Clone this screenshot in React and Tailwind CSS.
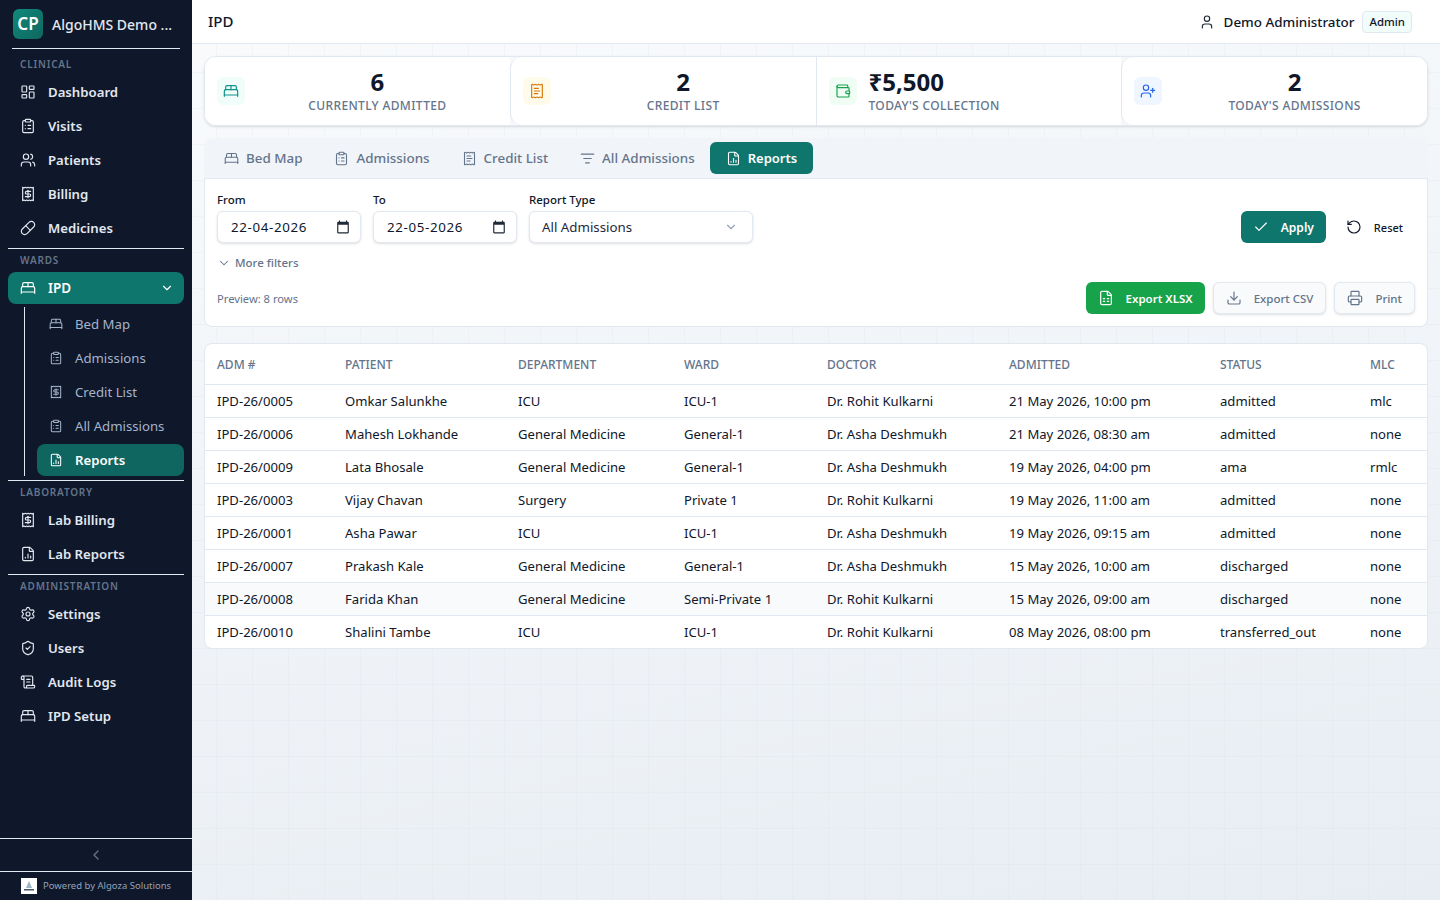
import React from 'react';
import {
  LayoutDashboard, ClipboardList, Users, Receipt, Pill, BedDouble, ChevronDown, ChevronLeft,
  ReceiptText, FileChartColumn, Settings, ShieldCheck, ScrollText, User, Wallet, UserPlus,
  ListFilter, Check, RotateCcw, FileSpreadsheet, Download, Printer,
} from 'lucide-react';

const rows = [
  ['IPD-26/0005', 'Omkar Salunkhe', 'ICU', 'ICU-1', 'Dr. Rohit Kulkarni', '21 May 2026, 10:00 pm', 'admitted', 'mlc'],
  ['IPD-26/0006', 'Mahesh Lokhande', 'General Medicine', 'General-1', 'Dr. Asha Deshmukh', '21 May 2026, 08:30 am', 'admitted', 'none'],
  ['IPD-26/0009', 'Lata Bhosale', 'General Medicine', 'General-1', 'Dr. Asha Deshmukh', '19 May 2026, 04:00 pm', 'ama', 'rmlc'],
  ['IPD-26/0003', 'Vijay Chavan', 'Surgery', 'Private 1', 'Dr. Rohit Kulkarni', '19 May 2026, 11:00 am', 'admitted', 'none'],
  ['IPD-26/0001', 'Asha Pawar', 'ICU', 'ICU-1', 'Dr. Asha Deshmukh', '19 May 2026, 09:15 am', 'admitted', 'none'],
  ['IPD-26/0007', 'Prakash Kale', 'General Medicine', 'General-1', 'Dr. Asha Deshmukh', '15 May 2026, 10:00 am', 'discharged', 'none'],
  ['IPD-26/0008', 'Farida Khan', 'General Medicine', 'Semi-Private 1', 'Dr. Rohit Kulkarni', '15 May 2026, 09:00 am', 'discharged', 'none'],
  ['IPD-26/0010', 'Shalini Tambe', 'ICU', 'ICU-1', 'Dr. Rohit Kulkarni', '08 May 2026, 08:00 pm', 'transferred_out', 'none'],
];

const headers = ['ADM #', 'PATIENT', 'DEPARTMENT', 'WARD', 'DOCTOR', 'ADMITTED', 'STATUS', 'MLC'];

const NavItem = ({ icon: Icon, label }) => (
  <div className="flex h-[34px] items-center gap-3 pl-5 text-[13.2px] font-semibold text-[#e2e8f0]">
    <Icon size={16} strokeWidth={1.75} className="shrink-0" />
    <span className="pt-px">{label}</span>
  </div>
);

const SubItem = ({ icon: Icon, label, active }) => (
  <div
    className={
      active
        ? 'mt-px flex h-8 items-center gap-3 rounded-lg bg-[#0f6660] pl-3 text-[13.2px] font-semibold text-white'
        : 'flex h-[34px] items-center gap-3 pl-3 text-[13.2px] text-[#a5b4cb]'
    }
  >
    <Icon size={14} strokeWidth={1.75} className="shrink-0" />
    <span className="pt-px">{label}</span>
  </div>
);

const SectionTitle = ({ children }) => (
  <div className="flex h-[22px] items-center pl-5 text-[10px] font-semibold tracking-[0.08em] text-[#64748b]">{children}</div>
);

const Divider = () => <div className="mx-2 h-px bg-[#e2e8f0]" />;

const Stat = ({ icon: Icon, tint, value, label, left, rounded, first }) => (
  <div className={`flex h-[68px] flex-1 items-center gap-3 bg-white px-3 ${first ? '' : 'border-l border-[#e2e8f0]'} ${rounded ? 'rounded-l-xl' : ''}`}>
    <div className={`flex h-7 w-7 shrink-0 items-center justify-center rounded-md ${tint}`}>
      <Icon size={16} strokeWidth={1.75} />
    </div>
    <div className={`flex flex-1 flex-col ${left ? 'items-start' : 'items-center'}`}>
      <div className="pb-[2px] text-[24px] leading-[28px] font-bold text-[#0f172a]">{value}</div>
      <div className="text-[12px] leading-[16px] font-medium tracking-[0.03em] text-[#64748b]">{label}</div>
    </div>
  </div>
);

const Tab = ({ icon: Icon, label, active }) => (
  <div
    className={
      active
        ? '-ml-px flex h-8 items-center gap-[7px] rounded-md bg-[#0f766e] px-4 text-[13px] font-semibold text-white'
        : 'flex h-8 items-center gap-[7px] px-4 text-[13.4px] font-medium text-[#64748b]'
    }
  >
    <Icon size={15} strokeWidth={1.75} />
    <span className="pt-px">{label}</span>
  </div>
);

const CalendarGlyph = () => (
  <svg viewBox="0 0 24 24" width="14" height="14" fill="#1f2937">
    <path d="M20 3h-1V1h-2v2H7V1H5v2H4c-1.1 0-2 .9-2 2v16c0 1.1.9 2 2 2h16c1.1 0 2-.9 2-2V5c0-1.1-.9-2-2-2zm0 18H4V8h16v13z" />
  </svg>
);

const DateField = ({ label, value }) => (
  <div className="flex w-[144px] flex-col">
    <label className="mb-[3px] text-[11.5px] leading-4 font-medium text-[#0f172a]">{label}</label>
    <div className="flex h-8 items-center justify-between rounded-md border border-[#e2e8f0] bg-white pr-[10px] pl-[13px] text-[13.3px] tracking-[0.05em] text-[#0f172a] shadow-sm">
      <span className="pt-px">{value}</span>
      <CalendarGlyph />
    </div>
  </div>
);

const GhostButton = ({ icon: Icon, label }) => (
  <div className="flex h-[32px] items-center gap-3 rounded-md border border-[#e2e8f0] bg-[#f8fafc] px-3 text-[11.5px] font-medium text-[#64748b] shadow-sm">
    <Icon size={16} strokeWidth={1.75} />
    <span className="pt-px">{label}</span>
  </div>
);

export default function App() {
  return (
    <div className="flex h-[900px] w-[1440px] overflow-hidden bg-[#f8fafc] font-['Noto_Sans',sans-serif]">
      <aside className="flex w-[192px] shrink-0 flex-col bg-[#0f172a]">
        <div className="flex h-[48px] items-center gap-[9px] pl-[13px]">
          <div className="flex h-[30px] w-[30px] items-center justify-center rounded-md bg-gradient-to-br from-[#0f8a7c] to-[#0f6660] text-[17px] font-semibold text-white">CP</div>
          <span className="text-[14px] font-medium text-[#e2e8f0]">AlgoHMS Demo ...</span>
        </div>
        <div className="mx-3 h-px bg-[#e2e8f0]" />
        <div className="pt-[4px]">
          <SectionTitle>CLINICAL</SectionTitle>
          <NavItem icon={LayoutDashboard} label="Dashboard" />
          <NavItem icon={ClipboardList} label="Visits" />
          <NavItem icon={Users} label="Patients" />
          <NavItem icon={Receipt} label="Billing" />
          <NavItem icon={Pill} label="Medicines" />
        </div>
        <div className="mt-[3px]"><Divider /></div>
        <SectionTitle>WARDS</SectionTitle>
        <div className="mx-2 mt-px flex h-8 items-center justify-between rounded-lg bg-[#0f766e] pr-[10px] pl-3 text-[13.5px] font-semibold text-white">
          <div className="flex items-center gap-3">
            <BedDouble size={16} strokeWidth={1.75} />
            <span>IPD</span>
          </div>
          <ChevronDown size={14} />
        </div>
        <div className="mt-[3px] ml-6 border-l border-[#e2e8f0] pr-2 pl-3">
          <SubItem icon={BedDouble} label="Bed Map" />
          <SubItem icon={ClipboardList} label="Admissions" />
          <SubItem icon={Receipt} label="Credit List" />
          <SubItem icon={ClipboardList} label="All Admissions" />
          <SubItem icon={FileChartColumn} label="Reports" active />
        </div>
        <div className="mt-1"><Divider /></div>
        <SectionTitle>LABORATORY</SectionTitle>
        <NavItem icon={Receipt} label="Lab Billing" />
        <NavItem icon={FileChartColumn} label="Lab Reports" />
        <div className="mt-[3px]"><Divider /></div>
        <SectionTitle>ADMINISTRATION</SectionTitle>
        <NavItem icon={Settings} label="Settings" />
        <NavItem icon={ShieldCheck} label="Users" />
        <NavItem icon={ScrollText} label="Audit Logs" />
        <NavItem icon={BedDouble} label="IPD Setup" />
        <div className="mt-auto h-px bg-[#e2e8f0]" />
        <div className="flex h-[32px] items-center justify-center text-[#64748b]">
          <ChevronLeft size={16} />
        </div>
        <div className="h-px bg-[#e2e8f0]" />
        <div className="flex h-[28px] items-center gap-[6px] pl-[21px]">
          <div className="flex h-4 w-4 items-center justify-center bg-white">
            <svg viewBox="0 0 16 16" width="16" height="16">
              <path d="M8 3l3 7H5z" fill="#9fb4c4" />
              <rect x="3" y="11" width="10" height="1.5" fill="#475569" />
            </svg>
          </div>
          <span className="pt-px text-[9.5px] text-[#94a3b8]">Powered by Algoza Solutions</span>
        </div>
      </aside>

      <div className="flex min-w-0 flex-1 flex-col">
        <header className="flex h-[44px] shrink-0 items-center justify-between border-b border-[#e2e8f0] bg-white pr-7 pl-4">
          <h1 className="text-[15px] font-medium text-[#0f172a]">IPD</h1>
          <div className="flex items-center gap-2">
            <User size={16} strokeWidth={1.75} className="text-[#1e293b]" />
            <span className="ml-[1px] pt-px text-[13.4px] font-medium text-[#0f172a]">Demo Administrator</span>
            <span className="rounded border border-[#e2e8f0] bg-[#f0fdfa] px-[6px] text-[11.4px] leading-[20px] font-medium text-[#0f172a]">Admin</span>
          </div>
        </header>

        <main className="flex-1 bg-[linear-gradient(90deg,rgba(100,116,139,0.035)_1px,transparent_1px),linear-gradient(180deg,rgba(100,116,139,0.035)_1px,transparent_1px),linear-gradient(170deg,#f8fafc_0%,#e8edf3_100%)] bg-[size:36px_36px,36px_36px,100%_100%] bg-[position:24px_0,0_28px,0_0] pt-3 pr-3 pl-3">
          <div className="flex overflow-hidden rounded-xl border border-[#e2e8f0] shadow">
            <Stat first icon={BedDouble} tint="bg-[#f0fdfa] text-[#0d9488]" value="6" label="CURRENTLY ADMITTED" />
            <Stat rounded icon={ReceiptText} tint="bg-[#fffbeb] text-[#d97706]" value="2" label="CREDIT LIST" />
            <Stat left icon={Wallet} tint="bg-[#f0fdf4] text-[#16a34a]" value="₹5,500" label="TODAY'S COLLECTION" />
            <Stat rounded icon={UserPlus} tint="bg-[#eff6ff] text-[#2563eb]" value="2" label="TODAY'S ADMISSIONS" />
          </div>

          <div className="mt-3 flex h-10 items-center rounded-t-lg bg-[#f1f5f9] pl-1">
            <Tab icon={BedDouble} label="Bed Map" />
            <Tab icon={ClipboardList} label="Admissions" />
            <Tab icon={ReceiptText} label="Credit List" />
            <Tab icon={ListFilter} label="All Admissions" />
            <Tab icon={FileChartColumn} label="Reports" active />
          </div>

          <section className="h-[149px] rounded-b-lg border border-[#e2e8f0] bg-white px-3 pt-[13px]">
            <div className="flex items-end gap-3">
              <DateField label="From" value="22-04-2026" />
              <DateField label="To" value="22-05-2026" />
              <div className="flex w-[224px] flex-col">
                <label className="mb-[3px] text-[11.5px] leading-4 font-medium text-[#0f172a]">Report Type</label>
                <div className="flex h-8 items-center justify-between rounded-md border border-[#e2e8f0] bg-white pr-[14px] pl-3 text-[13.3px] text-[#1e293b] shadow-sm">
                  <span className="pt-px">All Admissions</span>
                  <ChevronDown size={14} className="text-[#94a3b8]" />
                </div>
              </div>
              <div className="ml-auto flex items-center gap-2">
                <div className="flex h-8 items-center gap-3 rounded-md bg-[#0f766e] px-3 text-[12px] font-semibold text-white">
                  <Check size={16} strokeWidth={1.75} />
                  <span className="pt-px">Apply</span>
                </div>
                <div className="flex h-8 items-center gap-3 px-3 text-[11px] font-medium text-[#0f172a]">
                  <RotateCcw size={16} strokeWidth={1.75} />
                  <span className="pt-[2px]">Reset</span>
                </div>
              </div>
            </div>
            <div className="mt-[12px] flex h-4 items-center gap-[4px] text-[11.5px] font-medium text-[#64748b]">
              <ChevronDown size={14} strokeWidth={1.75} />
              <span>More filters</span>
            </div>
            <div className="mt-[11px] flex items-center justify-between">
              <span className="pt-[2px] text-[11.2px] text-[#64748b]">Preview: 8 rows</span>
              <div className="flex items-center gap-2">
                <div className="flex h-[32px] items-center gap-3 rounded-md bg-[#16a34a] px-3 text-[11.5px] font-semibold text-white">
                  <FileSpreadsheet size={16} strokeWidth={1.75} />
                  <span className="pt-px">Export XLSX</span>
                </div>
                <GhostButton icon={Download} label="Export CSV" />
                <GhostButton icon={Printer} label="Print" />
              </div>
            </div>
          </section>

          <section className="mt-4 overflow-hidden rounded-lg border border-[#e2e8f0] bg-white">
            <table className="w-full table-fixed border-collapse text-left">
              <colgroup>
                <col className="w-[128px]" />
                <col className="w-[173px]" />
                <col className="w-[166px]" />
                <col className="w-[143px]" />
                <col className="w-[182px]" />
                <col className="w-[211px]" />
                <col className="w-[150px]" />
                <col />
              </colgroup>
              <thead>
                <tr className="h-10 border-b border-[#e2e8f0]">
                  {headers.map((h) => (
                    <th key={h} className="px-3 pt-[2px] text-[12px] font-medium text-[#64748b]">{h}</th>
                  ))}
                </tr>
              </thead>
              <tbody>
                {rows.map((row, i) => (
                  <tr key={row[0]} className={`h-[33px] border-b border-[#e2e8f0] last:border-b-0 ${i === 6 ? 'bg-[#f8fafc]' : ''}`}>
                    {row.map((cell, j) => (
                      <td key={j} className="px-3 pt-[2px] text-[13.1px] text-[#0f172a]">{cell}</td>
                    ))}
                  </tr>
                ))}
              </tbody>
            </table>
          </section>
        </main>
      </div>
    </div>
  );
}
